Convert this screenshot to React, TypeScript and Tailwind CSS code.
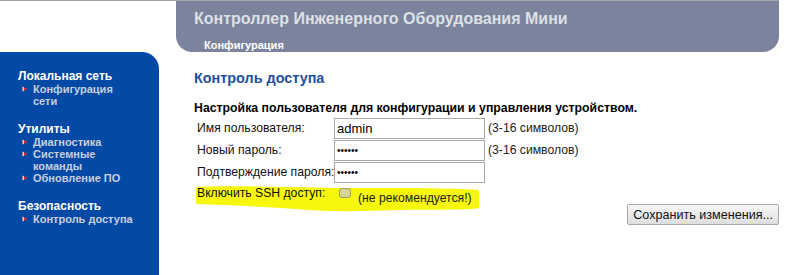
const menu = [
  { title: "Локальная сеть", items: [["Конфигурация", "сети"]] },
  { title: "Утилиты", items: [["Диагностика"], ["Системные", "команды"], ["Обновление ПО"]] },
  { title: "Безопасность", items: [["Контроль доступа"]] },
];

function Bullet() {
  return (
    <svg width="6" height="6" viewBox="0 0 6 6" className="mt-[3px] shrink-0">
      <path d="M0.5 0.5 L5.5 3 L0.5 5.5 Z" fill="#e8322c" />
      <path d="M0.5 0.5 L0.5 5.5 L2 4.7 L2 1.3 Z" fill="#f6c8c8" />
    </svg>
  );
}

function Sidebar() {
  return (
    <div className="w-[159px] h-[223px] shrink-0 bg-[#034aa6] rounded-tr-[17px] pt-[18px] pl-[18px]">
      {menu.map((sec, i) => (
        <div key={sec.title} className={i > 0 ? "mt-[16px]" : ""}>
          <div className="text-[12px] font-bold leading-[13px] text-white">{sec.title}</div>
          <div>
            {sec.items.map((lines) => (
              <div key={lines[0]} className="flex gap-[5px] pl-[4px]">
                <Bullet />
                <div className="text-[11px] font-bold leading-[12px] text-[#c9cfdc]">
                  {lines.map((l) => (
                    <div key={l}>{l}</div>
                  ))}
                </div>
              </div>
            ))}
          </div>
        </div>
      ))}
    </div>
  );
}

function Field({ label, value, type = "text", hint }: { label: string; value: string; type?: string; hint?: string }) {
  return (
    <div className="flex items-center h-[22px]">
      <div className="w-[140px] pl-[3px] whitespace-nowrap text-[12.2px] text-[#111]">{label}</div>
      <input
        type={type}
        defaultValue={value}
        className={
          "w-[151px] h-[21px] border border-[#a9a9a9] px-[2px] text-black outline-none " +
          (type === "password" ? "text-[10px]" : "text-[13px]")
        }
      />
      {hint && <span className="ml-[3px] text-[12.2px] text-[#222]">{hint}</span>}
    </div>
  );
}

export default function App() {
  return (
    <div className="relative w-[796px] h-[275px] bg-white overflow-hidden font-['Liberation_Sans',Arial,sans-serif]">
      <div className="w-[779px] h-px bg-[#a4a4a4]" />
      <div className="flex">
        <div className="w-[176px] shrink-0" />
        <div className="w-[603px] h-[51px] bg-[#7b849c] rounded-b-[16px] pt-[8px]">
          <div className="pl-[18px] text-[16px] font-bold leading-[19px] text-[#dde0e6]">
            Контроллер Инженерного Оборудования Мини
          </div>
          <div className="pl-[28px] mt-[11px] text-[11px] font-bold leading-[12px] text-white">Конфигурация</div>
        </div>
      </div>
      <div className="flex">
        <Sidebar />
        <div className="relative flex-1 pl-[35px] pt-[18px]">
          <div className="text-[14.4px] font-bold leading-[16px] text-[#1f4f9e]">Контроль доступа</div>
          <div className="mt-[15px] text-[12.3px] font-bold leading-[14px] text-black">
            Настройка пользователя для конфигурации и управления устройством.
          </div>
          <svg
            className="absolute left-[10px] top-[133px]"
            width="310"
            height="30"
            viewBox="0 0 310 30"
          >
            <path
              d="M27 2 C80 0 150 3 200 3 C240 3 280 3 312 5 L313 23 C290 26 260 24 230 25 C200 26 170 27 140 25 C100 22 60 20 27 19 Z"
              fill="#f7f700"
              opacity="0.95"
            />
          </svg>
          <div className="relative mt-[2px]">
            <Field label="Имя пользователя:" value="admin" hint="(3-16 символов)" />
            <Field label="Новый пароль:" value="123456" type="password" hint="(3-16 символов)" />
            <Field label="Подтверждение пароля:" value="123456" type="password" />
            <div className="flex items-start h-[22px] pt-[3px]">
              <div className="w-[145px] pl-[3px] whitespace-nowrap text-[12.2px] leading-[15px] text-[#111]">
                Включить SSH доступ:
              </div>
              <span className="mt-[2px] w-[12px] h-[10px] rounded-[3px] border border-[#9c9c66] bg-[#d6d690]" />
              <span className="ml-[7px] mt-[5px] text-[12.2px] leading-[15px] text-[#222]">(не рекомендуется!)</span>
            </div>
            <div className="flex justify-end pr-[17px] -mt-px">
              <button className="h-[21px] px-[5px] border border-[#a8a8a8] rounded-[2px] bg-gradient-to-b from-[#f6f6f6] to-[#dedede] text-[12.6px] leading-[16px] text-[#111]">
                Сохранить изменения...
              </button>
            </div>
          </div>
        </div>
      </div>
    </div>
  );
}
